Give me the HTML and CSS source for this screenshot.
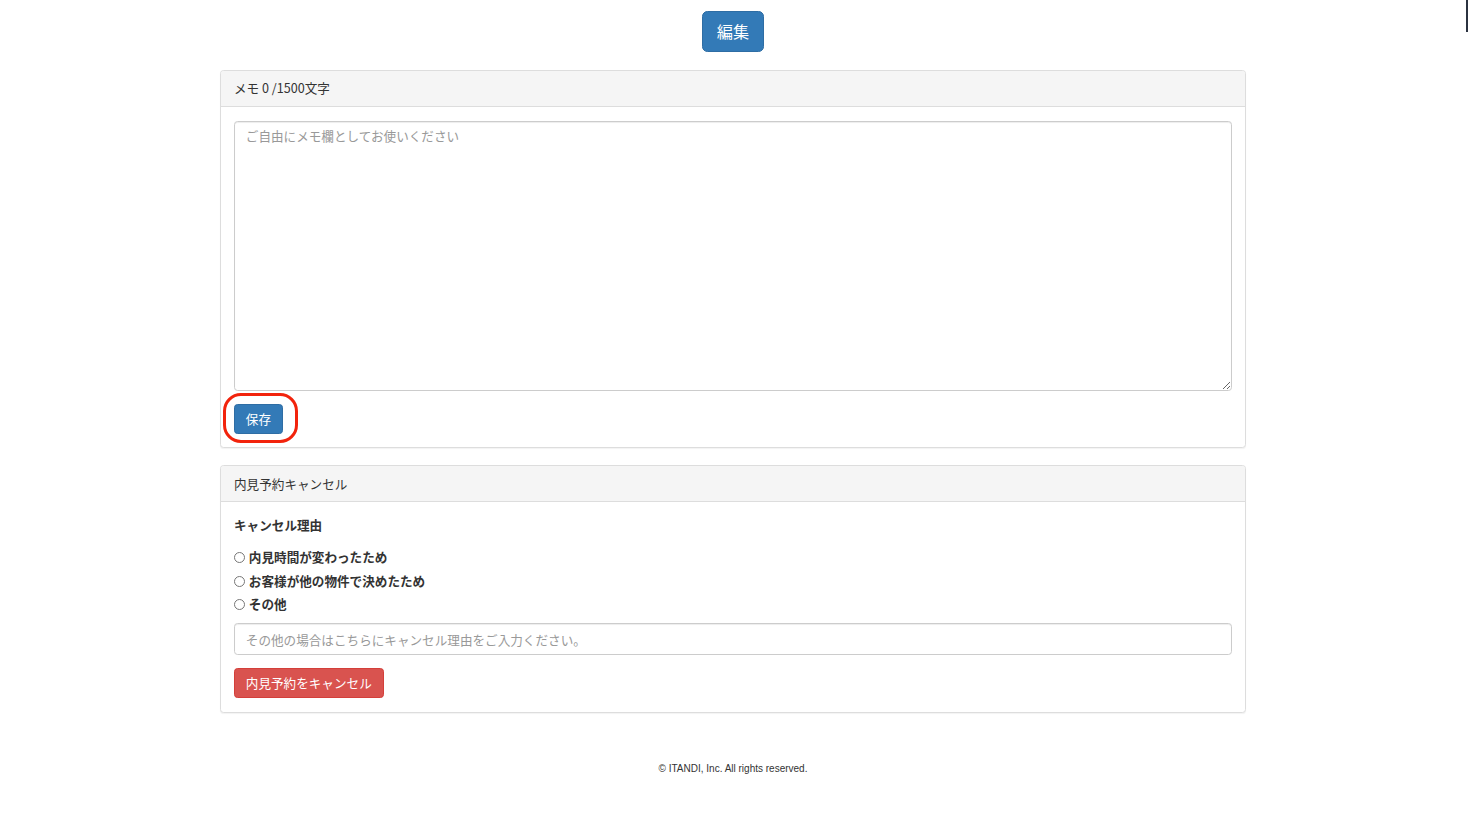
FILE: index.html
```html
<!DOCTYPE html>
<html lang="ja">
<head>
    <meta charset="UTF-8" />
    <meta name="viewport" content="width=device-width, initial-scale=1.0"/>
    <title>内見予約</title>
    <link rel="stylesheet" href="styles.css">
</head>
<body>
    <div class="scroll-mark"></div>
    <div class="page">
        <div class="top-actions">
            <button class="btn btn-primary btn-lg">編集</button>
        </div>

        <div class="panel">
            <div class="panel-heading">メモ 0 /1500文字</div>
            <div class="panel-body memo-body">
                <textarea class="form-control memo-text" placeholder="ご自由にメモ欄としてお使いください"></textarea>
                <div class="save-row">
                    <button class="btn btn-primary">保存</button>
                </div>
                <!-- annotation ring around the save button -->
                <div class="highlight-ring"></div>
            </div>
        </div>

        <div class="panel">
            <div class="panel-heading">内見予約キャンセル</div>
            <div class="panel-body">
                <div class="field-label">キャンセル理由</div>
                <label class="radio"><input type="radio" name="reason"> 内見時間が変わったため</label>
                <label class="radio"><input type="radio" name="reason"> お客様が他の物件で決めたため</label>
                <label class="radio"><input type="radio" name="reason"> その他</label>
                <input class="form-control other-input" type="text" placeholder="その他の場合はこちらにキャンセル理由をご入力ください。">
                <button class="btn btn-danger">内見予約をキャンセル</button>
            </div>
        </div>

        <div class="footer">
            <p>&copy; ITANDI, Inc. All rights reserved.</p>
        </div>
    </div>
</body>
</html>
```

FILE: styles.css
```css
body {
    font-family: "Noto Sans CJK JP", "Liberation Sans", sans-serif;
    font-size: 12.6px;
    line-height: 1.42857;
    color: #333;
    background-color: #fff;
    margin: 0;
    padding: 0 3px 0 0;
}
.scroll-mark {
    position: absolute;
    top: 0;
    right: 1px;
    width: 2px;
    height: 32px;
    background-color: #2b3240;
}
.page {
    width: 1026px;
    margin: 0 auto;
}
.top-actions {
    text-align: center;
    padding-top: 11px;
    margin-bottom: 18px;
}
.btn {
    display: inline-block;
    font-family: inherit;
    font-size: 12.6px;
    line-height: 1.42857;
    padding: 5px 10.8px;
    border: 1px solid transparent;
    border-radius: 3.6px;
    color: #fff;
    cursor: pointer;
}
.btn-primary {
    background-color: #337ab7;
    border-color: #2e6da4;
}
.btn-danger {
    background-color: #d9534f;
    border-color: #d43f3a;
}
.btn-lg {
    font-size: 16.2px;
    line-height: 1.3333;
    padding: 8.5px 14px;
    border-radius: 5.4px;
}
.panel {
    background-color: #fff;
    border: 1px solid #ddd;
    border-radius: 3.6px;
    margin-bottom: 17px;
    box-shadow: 0 1px 1px rgba(0, 0, 0, 0.05);
}
.panel-heading {
    background-color: #f5f5f5;
    border-bottom: 1px solid #ddd;
    padding: 8.5px 13px;
    border-radius: 3px 3px 0 0;
}
.panel-body {
    padding: 14px 13px 13.5px;
}
.memo-body {
    position: relative;
}
.form-control {
    display: block;
    width: 100%;
    box-sizing: border-box;
    font-family: inherit;
    font-size: 12.6px;
    line-height: 1.42857;
    color: #555;
    border: 1px solid #ccc;
    border-radius: 3.6px;
    padding: 5.4px 10.8px;
    box-shadow: inset 0 1px 1px rgba(0, 0, 0, 0.075);
}
.form-control::placeholder {
    color: #999;
}
.memo-text {
    height: 270px;
    resize: vertical;
}
.save-row {
    margin-top: 13px;
}
.highlight-ring {
    position: absolute;
    left: 2px;
    top: 286px;
    width: 69px;
    height: 44px;
    border: 3px solid #f2230c;
    border-radius: 18px;
}
.field-label {
    font-weight: bold;
    margin-bottom: 14px;
}
.radio {
    display: block;
    font-weight: bold;
    line-height: 18px;
    margin-bottom: 5.5px;
}
.radio input {
    margin: 0 1px 0 0;
    width: 11px;
    height: 11px;
    vertical-align: -1px;
}
.other-input {
    height: 32px;
    margin-top: 10px;
    margin-bottom: 13px;
}
.footer {
    text-align: center;
    padding-top: 32px;
}
.footer p {
    font-family: "Liberation Sans", Arial, sans-serif;
    font-size: 10px;
    margin: 0;
}
```
